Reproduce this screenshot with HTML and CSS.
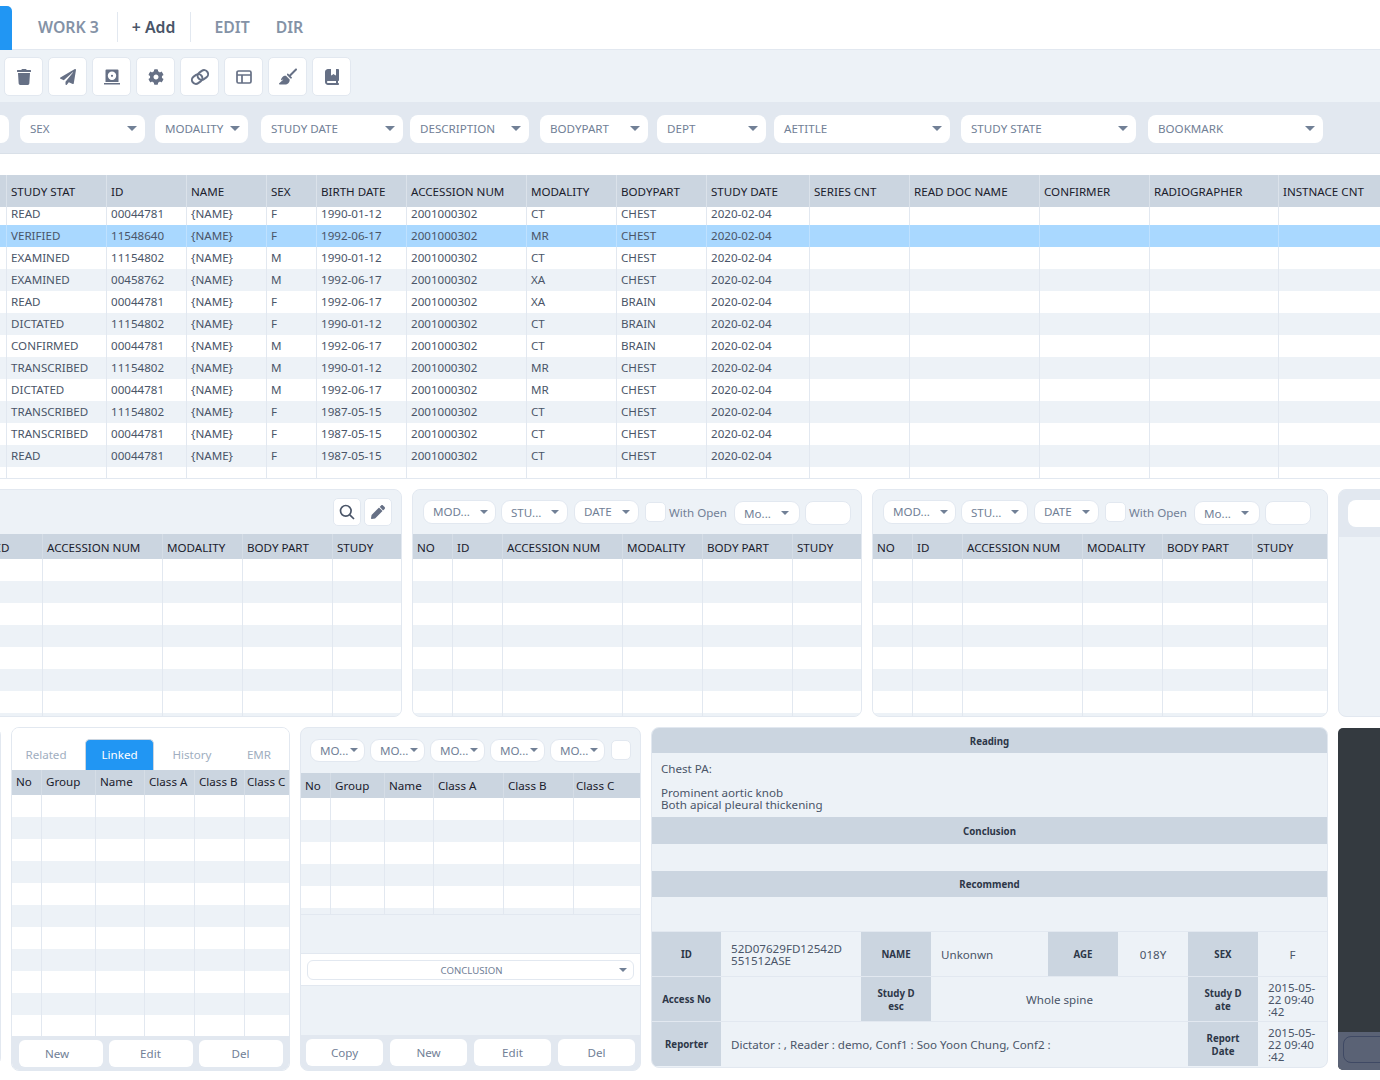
FILE: index.html
```html
<!DOCTYPE html>
<html lang="en">
<head>
<meta charset="utf-8">
<title>Worklist</title>
<link rel="stylesheet" href="styles.css">
</head>
<body>
<div class="page">
  <nav class="tabs">
    <span class="tab-active"></span>
    <span class="tab tab-work">WORK 3</span>
    <span class="tab tab-add">+ Add</span>
    <span class="tab tab-edit">EDIT</span>
    <span class="tab tab-dir">DIR</span>
  </nav>

  <div class="toolbar">
    <button class="tool"><svg class="ico" viewBox="0 0 448 512"><path d="M432 32H312l-9.4-18.7A24 24 0 0 0 281.100 0H166.800a23.720 23.720 0 0 0-21.400 13.300L136 32H16A16 16 0 0 0 0 48v32a16 16 0 0 0 16 16h416a16 16 0 0 0 16-16V48a16 16 0 0 0-16-16zM53.200 467a48 48 0 0 0 47.900 45h245.800a48 48 0 0 0 47.900-45L416 128H32z"/></svg></button>
    <button class="tool"><svg class="ico" viewBox="0 0 512 512"><path d="M476 3.200L12.500 270.600c-18.100 10.400-15.800 35.600 2.200 43.200L121 358.400l287.300-253.200c5.500-4.900 13.300 2.600 8.600 8.300L176 407v80.500c0 23.600 28.500 32.900 42.500 15.800L282 426l124.600 52.200c14.200 6 30.400-2.900 33-18.200l72-432C515 7.800 493.300-6.800 476 3.200z"/></svg></button>
    <button class="tool"><svg class="ico" viewBox="0 0 16 16"><path fill-rule="evenodd" d="M2.500 0.500h11a1 1 0 0 1 1 1V13h-13V1.500a1 1 0 0 1 1-1zM8 2.600a4.200 4.200 0 1 0 0 8.400 4.200 4.200 0 0 0 0-8.400zM8 5.700a1.100 1.100 0 1 1 0 2.200 1.100 1.100 0 0 1 0-2.200zM0 14h16v1.500H0z"/></svg></button>
    <button class="tool"><svg class="ico" viewBox="0 0 512 512"><path d="M487.400 315.700l-42.600-24.600c4.300-23.200 4.300-47 0-70.200l42.600-24.600c4.900-2.800 7.100-8.600 5.500-14-11.100-35.600-30-67.800-54.700-94.600-3.800-4.100-10-5.100-14.800-2.300L380.800 110c-17.900-15.400-38.500-27.300-60.800-35.100V25.800c0-5.600-3.900-10.500-9.400-11.700-36.700-8.200-74.300-7.800-109.200 0-5.500 1.200-9.400 6.100-9.400 11.700V75c-22.200 7.900-42.800 19.800-60.800 35.100L88.700 85.500c-4.900-2.800-11-1.900-14.800 2.300-24.700 26.700-43.600 58.900-54.700 94.600-1.700 5.400.6 11.200 5.500 14L67.300 221c-4.300 23.200-4.300 47 0 70.200l-42.600 24.600c-4.900 2.800-7.100 8.600-5.500 14 11.100 35.600 30 67.800 54.700 94.600 3.800 4.100 10 5.100 14.800 2.300l42.600-24.600c17.900 15.400 38.500 27.300 60.800 35.100v49.200c0 5.600 3.900 10.500 9.400 11.700 36.700 8.200 74.300 7.800 109.200 0 5.500-1.200 9.400-6.100 9.400-11.700v-49.200c22.200-7.900 42.800-19.800 60.800-35.100l42.600 24.600c4.900 2.800 11 1.900 14.800-2.300 24.700-26.700 43.600-58.900 54.700-94.600 1.500-5.500-.7-11.300-5.600-14.100zM256 336c-44.100 0-80-35.900-80-80s35.900-80 80-80 80 35.900 80 80-35.900 80-80 80z"/></svg></button>
    <button class="tool"><svg class="ico ico-link" viewBox="0 0 20 20"><g transform="rotate(-35 10 10)"><rect x="1" y="6" width="11" height="8" rx="4"/><rect x="8" y="6" width="11" height="8" rx="4"/></g></svg></button>
    <button class="tool"><svg class="ico ico-line" viewBox="0 0 16 16"><rect x="1" y="2" width="14" height="12" rx="1.500"/><path d="M1 6h14M6 6v8"/></svg></button>
    <button class="tool"><svg class="ico ico-broom" viewBox="0 0 576 512"><path d="M566.600 54.600c12.500-12.500 12.500-32.800 0-45.300s-32.800-12.500-45.300 0l-192 192-34.700-34.700c-4.200-4.200-10-6.600-16-6.600c-12.500 0-22.600 10.100-22.600 22.600v29.100L364.300 320h29.100c12.500 0 22.600-10.100 22.600-22.600c0-6-2.400-11.800-6.600-16l-34.700-34.700 192-192zM341.100 353.400L222.600 234.900c-42.700-3.700-85.200 11.700-115.800 42.300l-8 8C76.500 307.500 64 337.700 64 369.200c0 6.800 7.100 11.200 13.200 8.200l51.100-25.500c5-2.500 9.500 4.100 5.400 7.900L7.300 473.400C2.700 477.600 0 483.600 0 489.900C0 502.100 9.900 512 22.100 512l173.300 0c38.800 0 75.900-15.400 103.400-42.800c30.600-30.600 45.900-73.100 42.300-115.800z"/></svg></button>
    <button class="tool"><svg class="ico" viewBox="0 0 448 512"><path d="M0 96C0 43 43 0 96 0h96V190.700c0 13.400 15.500 20.900 26 12.500L272 160l54 43.200c10.500 8.400 26 .9 26-12.500V0h32 32c17.700 0 32 14.300 32 32V352c0 17.700-14.300 32-32 32v64c17.700 0 32 14.300 32 32s-14.300 32-32 32H384 96c-53 0-96-43-96-96V96zM64 416c0 17.700 14.300 32 32 32H352V384H96c-17.700 0-32 14.300-32 32z"/></svg></button>
  </div>

  <div class="filters">
    <div class="select f-first"><span class="caret"></span></div>
    <div class="select f-sex"><span>SEX</span><span class="caret"></span></div>
    <div class="select f-modality"><span>MODALITY</span><span class="caret"></span></div>
    <div class="select f-date"><span>STUDY DATE</span><span class="caret"></span></div>
    <div class="select f-desc"><span>DESCRIPTION</span><span class="caret"></span></div>
    <div class="select f-body"><span>BODYPART</span><span class="caret"></span></div>
    <div class="select f-dept"><span>DEPT</span><span class="caret"></span></div>
    <div class="select f-ae"><span>AETITLE</span><span class="caret"></span></div>
    <div class="select f-state"><span>STUDY STATE</span><span class="caret"></span></div>
    <div class="select f-book"><span>BOOKMARK</span><span class="caret"></span></div>
  </div>

  <section class="worklist">
    <table class="wl-table wl-head">
      <colgroup><col class="w6"><col class="w100"><col class="w80"><col class="w80"><col class="w50"><col class="w90"><col class="w120"><col class="w90"><col class="w90"><col class="w103"><col class="w100"><col class="w130"><col class="w110"><col class="w129"><col class="w102"></colgroup>
      <tr><th></th><th>STUDY STAT</th><th>ID</th><th>NAME</th><th>SEX</th><th>BIRTH DATE</th><th>ACCESSION NUM</th><th>MODALITY</th><th>BODYPART</th><th>STUDY DATE</th><th>SERIES CNT</th><th>READ DOC NAME</th><th>CONFIRMER</th><th>RADIOGRAPHER</th><th>INSTNACE CNT</th></tr>
    </table>
    <div class="wl-scroll">
    <table class="wl-table wl-body">
      <colgroup><col class="w6"><col class="w100"><col class="w80"><col class="w80"><col class="w50"><col class="w90"><col class="w120"><col class="w90"><col class="w90"><col class="w103"><col class="w100"><col class="w130"><col class="w110"><col class="w129"><col class="w102"></colgroup>
      <tr><td></td><td>READ</td><td>00044781</td><td>{NAME}</td><td>F</td><td>1990-01-12</td><td>2001000302</td><td>CT</td><td>CHEST</td><td>2020-02-04</td><td></td><td></td><td></td><td></td><td></td></tr>
      <tr class="selected"><td></td><td>VERIFIED</td><td>11548640</td><td>{NAME}</td><td>F</td><td>1992-06-17</td><td>2001000302</td><td>MR</td><td>CHEST</td><td>2020-02-04</td><td></td><td></td><td></td><td></td><td></td></tr>
      <tr><td></td><td>EXAMINED</td><td>11154802</td><td>{NAME}</td><td>M</td><td>1990-01-12</td><td>2001000302</td><td>CT</td><td>CHEST</td><td>2020-02-04</td><td></td><td></td><td></td><td></td><td></td></tr>
      <tr><td></td><td>EXAMINED</td><td>00458762</td><td>{NAME}</td><td>M</td><td>1992-06-17</td><td>2001000302</td><td>XA</td><td>CHEST</td><td>2020-02-04</td><td></td><td></td><td></td><td></td><td></td></tr>
      <tr><td></td><td>READ</td><td>00044781</td><td>{NAME}</td><td>F</td><td>1992-06-17</td><td>2001000302</td><td>XA</td><td>BRAIN</td><td>2020-02-04</td><td></td><td></td><td></td><td></td><td></td></tr>
      <tr><td></td><td>DICTATED</td><td>11154802</td><td>{NAME}</td><td>F</td><td>1990-01-12</td><td>2001000302</td><td>CT</td><td>BRAIN</td><td>2020-02-04</td><td></td><td></td><td></td><td></td><td></td></tr>
      <tr><td></td><td>CONFIRMED</td><td>00044781</td><td>{NAME}</td><td>M</td><td>1992-06-17</td><td>2001000302</td><td>CT</td><td>BRAIN</td><td>2020-02-04</td><td></td><td></td><td></td><td></td><td></td></tr>
      <tr><td></td><td>TRANSCRIBED</td><td>11154802</td><td>{NAME}</td><td>M</td><td>1990-01-12</td><td>2001000302</td><td>MR</td><td>CHEST</td><td>2020-02-04</td><td></td><td></td><td></td><td></td><td></td></tr>
      <tr><td></td><td>DICTATED</td><td>00044781</td><td>{NAME}</td><td>M</td><td>1992-06-17</td><td>2001000302</td><td>MR</td><td>CHEST</td><td>2020-02-04</td><td></td><td></td><td></td><td></td><td></td></tr>
      <tr><td></td><td>TRANSCRIBED</td><td>11154802</td><td>{NAME}</td><td>F</td><td>1987-05-15</td><td>2001000302</td><td>CT</td><td>CHEST</td><td>2020-02-04</td><td></td><td></td><td></td><td></td><td></td></tr>
      <tr><td></td><td>TRANSCRIBED</td><td>00044781</td><td>{NAME}</td><td>F</td><td>1987-05-15</td><td>2001000302</td><td>CT</td><td>CHEST</td><td>2020-02-04</td><td></td><td></td><td></td><td></td><td></td></tr>
      <tr><td></td><td>READ</td><td>00044781</td><td>{NAME}</td><td>F</td><td>1987-05-15</td><td>2001000302</td><td>CT</td><td>CHEST</td><td>2020-02-04</td><td></td><td></td><td></td><td></td><td></td></tr>
      <tr><td></td><td></td><td></td><td></td><td></td><td></td><td></td><td></td><td></td><td></td><td></td><td></td><td></td><td></td><td></td></tr>
    </table>
    </div>
  </section>

  <section class="mid-row">
    <div class="panel p-450">
      <div class="p-tools tools-end">
        <button class="mini"><svg class="ico-line ico-search" viewBox="0 0 16 16"><circle cx="6.800" cy="6.800" r="5.300"/><path d="M10.800 10.800 15 15"/></svg></button>
        <button class="mini"><svg class="ico-s" viewBox="0 0 512 512"><path d="M497.900 142.100l-46.100 46.100c-4.700 4.700-12.300 4.700-17 0l-111-111c-4.700-4.700-4.700-12.300 0-17l46.100-46.100c18.700-18.700 49.100-18.700 67.900 0l60.100 60.100c18.800 18.700 18.800 49.100 0 67.900zM284.200 99.800L21.600 362.400.4 483.900c-2.900 16.400 11.400 30.600 27.800 27.800l121.500-21.300 262.600-262.600c4.700-4.700 4.700-12.300 0-17l-111-111c-4.800-4.700-12.400-4.700-17.100 0z"/></svg></button>
      </div>
      <div class="g-head"><span class="c40">NO</span><span class="c50">ID</span><span class="c120">ACCESSION NUM</span><span class="c80">MODALITY</span><span class="c90">BODY PART</span><span class="c-rest">STUDY</span></div>
      <div class="g-body"><i class="c40"></i><i class="c50"></i><i class="c120"></i><i class="c80"></i><i class="c90"></i><i class="c-rest"></i></div>
    </div>

    <div class="panel p-450">
      <div class="p-tools">
        <div class="select s-sm s-mod"><span>MOD...</span><span class="caret"></span></div>
        <div class="select s-sm s-stu"><span>STU...</span><span class="caret"></span></div>
        <div class="select s-sm s-dt"><span>DATE</span><span class="caret"></span></div>
        <span class="check"></span><span class="open-label">With Open</span>
        <div class="select s-sm s-mo"><span>Mo...</span><span class="caret"></span></div>
        <span class="field"></span>
      </div>
      <div class="g-head"><span class="c40">NO</span><span class="c50">ID</span><span class="c120">ACCESSION NUM</span><span class="c80">MODALITY</span><span class="c90">BODY PART</span><span class="c-rest">STUDY</span></div>
      <div class="g-body"><i class="c40"></i><i class="c50"></i><i class="c120"></i><i class="c80"></i><i class="c90"></i><i class="c-rest"></i></div>
    </div>

    <div class="panel p-456">
      <div class="p-tools">
        <div class="select s-sm s-mod"><span>MOD...</span><span class="caret"></span></div>
        <div class="select s-sm s-stu"><span>STU...</span><span class="caret"></span></div>
        <div class="select s-sm s-dt"><span>DATE</span><span class="caret"></span></div>
        <span class="check"></span><span class="open-label">With Open</span>
        <div class="select s-sm s-mo"><span>Mo...</span><span class="caret"></span></div>
        <span class="field"></span>
      </div>
      <div class="g-head"><span class="c40">NO</span><span class="c50">ID</span><span class="c120">ACCESSION NUM</span><span class="c80">MODALITY</span><span class="c90">BODY PART</span><span class="c-rest">STUDY</span></div>
      <div class="g-body"><i class="c40"></i><i class="c50"></i><i class="c120"></i><i class="c80"></i><i class="c90"></i><i class="c-rest"></i></div>
    </div>

    <div class="panel p-side">
      <div class="side-top"><span class="side-field"></span></div>
    </div>
  </section>

  <section class="low-row">
    <div class="stub"></div>

    <div class="panel p-a">
      <div class="a-tabs">
        <span class="a-tab t-rel">Related</span>
        <span class="a-tab t-link">Linked</span>
        <span class="a-tab t-his">History</span>
        <span class="a-tab t-emr">EMR</span>
      </div>
      <div class="g-head h-a"><span class="a1">No</span><span class="a2">Group</span><span class="a3">Name</span><span class="a4">Class A</span><span class="a4">Class B</span><span class="c-rest tight">Class C</span></div>
      <div class="g-body b-a"><i class="a1"></i><i class="a2"></i><i class="a3"></i><i class="a4"></i><i class="a4"></i><i class="c-rest"></i></div>
      <div class="p-foot">
        <button class="foot-btn shift">New</button><button class="foot-btn">Edit</button><button class="foot-btn">Del</button>
      </div>
    </div>

    <div class="panel p-b">
      <div class="b-tools">
        <div class="select s-xs"><span>MO...</span><span class="caret"></span></div>
        <div class="select s-xs"><span>MO...</span><span class="caret"></span></div>
        <div class="select s-xs"><span>MO...</span><span class="caret"></span></div>
        <div class="select s-xs"><span>MO...</span><span class="caret"></span></div>
        <div class="select s-xs"><span>MO...</span><span class="caret"></span></div>
        <span class="check"></span>
      </div>
      <div class="g-head h-b"><span class="b1">No</span><span class="b2">Group</span><span class="b3">Name</span><span class="b4">Class A</span><span class="b4">Class B</span><span class="c-rest tight">Class C</span></div>
      <div class="g-body b-b"><i class="b1"></i><i class="b2"></i><i class="b3"></i><i class="b4"></i><i class="b4"></i><i class="c-rest"></i></div>
      <div class="b-blank b-blank1"></div>
      <div class="b-concl"><div class="select s-concl"><span class="concl-label">CONCLUSION</span><span class="caret"></span></div></div>
      <div class="b-blank b-blank2"></div>
      <div class="p-foot foot-b">
        <button class="foot-btn">Copy</button><button class="foot-btn">New</button><button class="foot-btn">Edit</button><button class="foot-btn">Del</button>
      </div>
    </div>

    <div class="panel p-c">
      <h4 class="c-title t1">Reading</h4>
      <div class="c-text">Chest PA:<br><br>Prominent aortic knob<br>Both apical pleural thickening</div>
      <h4 class="c-title t2">Conclusion</h4>
      <div class="c-empty e1"></div>
      <h4 class="c-title t3">Recommend</h4>
      <div class="c-empty e2"></div>
      <table class="info">
        <colgroup><col class="i69"><col class="i140"><col class="i70"><col class="i117"><col class="i70"><col class="i70"><col class="i70"><col class="i69"></colgroup>
        <tr class="r44"><th>ID</th><td>52D07629FD12542D<br>551512ASE</td><th>NAME</th><td>Unkonwn</td><th>AGE</th><td class="ctr">018Y</td><th>SEX</th><td class="ctr">F</td></tr>
        <tr class="r45"><th>Access No</th><td></td><th>Study D<br>esc</th><td colspan="3" class="ctr">Whole spine</td><th>Study D<br>ate</th><td>2015-05-<br>22 09:40<br>:42</td></tr>
        <tr class="r46"><th>Reporter</th><td colspan="5">Dictator : , Reader : demo, Conf1 : Soo Yoon Chung, Conf2 :</td><th>Report<br>Date</th><td>2015-05-<br>22 09:40<br>:42</td></tr>
      </table>
    </div>

    <div class="p-dark">
      <div class="dark-foot"><span class="dark-btn"></span></div>
    </div>
  </section>
</div>
</body>
</html>
```

FILE: styles.css
```css
* { box-sizing: border-box; }
html, body { margin: 0; padding: 0; }
body { font-family: "Noto Sans", "Open Sans", sans-serif; font-size: 11.6px; color: #4a5568; background: #fff; }
.page { width: 1380px; height: 1080px; overflow: hidden; }

/* top tabs */
.tabs { display: flex; align-items: center; height: 50px; padding-top: 5px; background: #fff; border-bottom: 1px solid #e2e8f0; font-size: 15.8px; font-weight: 600; color: #8492a6; }
.tab-active { align-self: flex-end; width: 12px; height: 44px; background: #2196f3; border-top-right-radius: 5px; margin-bottom: -1px; }
.tab { line-height: 30px; white-space: nowrap; }
.tab-work { margin-left: 26px; padding-right: 18px; border-right: 1px solid #e2e8f0; }
.tab-add { padding: 0 15px 0 14px; color: #4a5568; border-right: 1px solid #e2e8f0; }
.tab-edit { margin-left: 23px; }
.tab-dir { margin-left: 26px; }

/* icon toolbar */
.toolbar { display: flex; gap: 5px; height: 53px; padding: 7px 0 0 4px; background: #edf2f7; border-bottom: 1px solid #e2e8f0; }
.tool { display: flex; align-items: center; justify-content: center; width: 39px; height: 39px; padding: 0; background: #fff; border: 1px solid #e2e8f0; border-radius: 5px; }
.ico { width: 16px; height: 16px; fill: #667085; }
.ico-link { fill: none; stroke: #667085; stroke-width: 2; width: 20px; height: 20px; }
.ico-line { fill: none; stroke: #667085; stroke-width: 1.700; }
.ico-broom { width: 18px; height: 17px; }

/* filter bar */
.filters { display: flex; height: 51px; padding-top: 12px; margin-left: -100px; background: #e2e8f0; border-bottom: 1px solid #d9e0e8; width: 1480px; }
.select { display: flex; align-items: center; justify-content: space-between; height: 28px; padding: 0 8px 0 10px; background: #fff; border-radius: 8px; color: #718096; white-space: nowrap; }
.filters .select { padding-bottom: 1px; }
.caret { flex: none; width: 0; height: 0; border-left: 5px solid transparent; border-right: 5px solid transparent; border-top: 5px solid #718096; }
.f-first { width: 109px; }
.f-sex { width: 125px; margin-left: 11px; }
.f-modality { width: 93px; margin-left: 10px; }
.f-date { width: 142px; margin-left: 13px; }
.f-desc { width: 119px; margin-left: 7px; }
.f-body { width: 108px; margin-left: 11px; }
.f-dept { width: 109px; margin-left: 9px; }
.f-ae { width: 176px; margin-left: 8px; }
.f-state { width: 175px; margin-left: 11px; }
.f-book { width: 175px; margin-left: 12px; }

/* main worklist */
.worklist { margin-top: 21px; height: 304px; border-bottom: 1px solid #e2e8f0; overflow: hidden; }
.wl-table { table-layout: fixed; border-collapse: collapse; width: 1380px; }
.w6 { width: 6px; } .w50 { width: 50px; } .w80 { width: 80px; } .w90 { width: 90px; } .w100 { width: 100px; }
.w102 { width: 102px; } .w103 { width: 103px; } .w110 { width: 110px; } .w120 { width: 120px; } .w129 { width: 129px; } .w130 { width: 130px; }
.wl-head { position: relative; z-index: 1; background: #cbd5e0; }
.wl-head th { height: 32px; padding: 0 0 0 4.500px; text-align: left; font-weight: 400; color: #1a202c; border-left: 1px solid #dbe2ea; white-space: nowrap; overflow: hidden; }
.wl-head th:first-child { border-left: 0; }
.wl-scroll { margin-top: -4px; height: 276px; overflow: hidden; }
.wl-body td { height: 22px; padding: 0 0 0 4.500px; border-left: 1px solid #e2e8f0; white-space: nowrap; overflow: hidden; line-height: 16px; }
.wl-body td:first-child { border-left: 0; }
.wl-body tr:nth-child(even) { background: #edf2f7; }
.wl-body tr.selected { background: #a9d8ff; }
.wl-body tr.selected td { border-left-color: #bfe1ff; }

/* shared panel */
.panel { border: 1px solid #e2e8f0; border-radius: 8px; overflow: hidden; background: #edf2f7; flex: none; }
.mid-row { display: flex; gap: 10px; margin: 10px 0 0 -48px; height: 228px; }
.p-450 { width: 450px; }
.p-456 { width: 456px; }
.p-side { width: 100px; }
.p-tools { display: flex; align-items: center; height: 44px; padding: 0 0 0 10px; background: #edf2f7; color: #718096; }
.tools-end { justify-content: flex-end; gap: 3px; padding-right: 9px; }
.mini { display: flex; align-items: center; justify-content: center; width: 28px; height: 28px; padding: 0; background: #fff; border: 1px solid #e2e8f0; border-radius: 5px; }
.ico-s { width: 14px; height: 14px; fill: #667085; }
.ico-search { width: 16px; height: 16px; stroke: #4a5568; }
.s-sm { height: 24px; padding: 0 8px 0 9px; border: 1px solid #e2e8f0; border-radius: 9px; }
.s-sm .caret { border-left-width: 4px; border-right-width: 4px; border-top-width: 4px; }
.s-mod { width: 73px; padding-right: 7px; }
.s-stu { width: 67px; margin-left: 5px; }
.s-dt { width: 65px; margin-left: 6px; }
.s-mod span:first-child, .s-dt span:first-child { padding-bottom: 2px; }
.s-mo { width: 66px; margin-left: 7px; margin-top: 2px; padding-left: 9px; padding-right: 10px; }
.check { flex: none; width: 21px; height: 20px; background: #fff; border: 1px solid #e2e8f0; border-radius: 5px; }
.s-dt + .check { margin-left: 6px; }
.open-label { margin-left: 3px; margin-top: 1px; white-space: nowrap; }
.field { flex: none; width: 46px; height: 24px; margin-left: 5px; margin-top: 2px; background: #fff; border: 1px solid #e2e8f0; border-radius: 8px; }

.g-head { display: flex; height: 25px; background: #cbd5e0; color: #1a202c; line-height: 27px; white-space: nowrap; }
.g-head span { flex: none; padding-left: 4px; overflow: hidden; border-left: 1px solid #d5dde6; }
.g-head span:first-child { border-left: 0; }
.g-body { display: flex; height: 158px; background: repeating-linear-gradient(#fff 0 22px, #edf2f7 22px 44px); }
.g-body i { flex: none; border-left: 1px solid #e2e8f0; }
.g-body i:first-child { border-left: 0; }
.c40 { width: 39px; } .c50 { width: 50px; } .c80 { width: 80px; } .c90 { width: 90px; } .c120 { width: 120px; }
.g-head .c-rest, .g-body .c-rest { flex: 1; }
.g-head .tight { padding-left: 2px; }

.side-top { height: 47px; padding: 10px 0 0 9px; background: #e2e8f0; border-bottom: 1px solid #e2e8f0; }
.side-field { display: block; height: 27px; background: #fff; border-radius: 8px; }

/* lower row */
.low-row { display: flex; align-items: flex-start; gap: 10px; margin: 10px 0 0 -50px; }
.stub { flex: none; width: 51px; height: 339px; background: #fff; border: 1px solid #e2e8f0; border-radius: 8px; }

.p-a { width: 279px; height: 344px; background: #fff; }
.a-tabs { display: flex; height: 42px; padding-top: 11px; background: #fff; color: #a0aec0; line-height: 31px; }
.a-tab { flex: none; text-align: center; }
.t-rel { width: 73px; padding-right: 5px; }
.t-link { width: 69px; background: #2196f3; color: #fff; border: 1px solid #cbd5e0; border-bottom: 0; border-radius: 5px 5px 0 0; line-height: 30px; }
.t-his { width: 76px; }
.t-emr { width: 58px; }
.h-a { line-height: 24px; }
.h-b { line-height: 26px; }
.a1 { width: 29px; } .a2 { width: 54px; } .a3 { width: 49px; } .a4 { width: 50px; }
.b1 { width: 29px; } .b2 { width: 54px; } .b3 { width: 49px; } .b4 { width: 70px; }
.b-a { height: 241px; }
.p-foot { display: flex; justify-content: center; gap: 6px; height: 35px; padding-top: 4px; background: #e2e8f0; }
.foot-btn { flex: none; width: 84px; height: 27px; padding: 0; background: #fff; border: 0; border-radius: 6px; color: #718096; font: inherit; }
.shift { padding-right: 7px; }

.p-b { width: 341px; height: 344px; }
.b-tools { display: flex; align-items: center; gap: 5px; height: 45px; padding: 0 0 1px 9px; }
.s-xs { width: 55px; height: 23px; padding: 0 6px 0 9px; border: 1px solid #e2e8f0; border-radius: 9px; }
.s-xs .caret { border-left-width: 4px; border-right-width: 4px; border-top-width: 4px; }
.b-tools .check { width: 20px; height: 20px; margin-left: 1px; }
.b-b { height: 117px; border-bottom: 1px solid #e2e8f0; }
.b-blank1 { height: 38px; }
.b-blank2 { height: 49px; }
.b-concl { height: 33px; padding: 6px 6px 0; background: #fff; border-top: 1px solid #e2e8f0; border-bottom: 1px solid #e2e8f0; }
.s-concl { justify-content: flex-end; height: 20px; border: 1px solid #e2e8f0; border-radius: 6px; padding: 0 6px; }
.concl-label { flex: 1; padding-left: 10px; text-align: center; font-size: 9.6px; }
.s-concl .caret { border-left-width: 4px; border-right-width: 4px; border-top-width: 4px; }
.foot-b { justify-content: flex-start; gap: 7px; padding-left: 5px; height: 36px; }
.foot-b .foot-btn { width: 77px; }

.p-c { width: 677px; height: 341px; }
.c-title { margin: 0; background: #cbd5e0; color: #2d3748; font-size: 9.7px; font-weight: 700; text-align: center; }
.t1 { height: 25px; line-height: 28px; }
.t2 { height: 27px; line-height: 29px; }
.t3 { height: 26px; line-height: 28px; }
.c-text { height: 64px; padding: 10px 9px 0; line-height: 12px; }
.c-empty.e1 { height: 27px; }
.c-empty.e2 { height: 35px; border-bottom: 1px solid #e2e8f0; }
.info { table-layout: fixed; border-collapse: collapse; width: 675px; }
.i69 { width: 69px; } .i70 { width: 70px; } .i117 { width: 117px; } .i140 { width: 140px; }
.r44 { height: 44px; } .r45 { height: 45px; } .r46 { height: 45px; }
.info th { padding: 2px 4px 0; background: #cbd5e0; color: #2d3748; font-size: 9.7px; line-height: 13px; font-weight: 700; text-align: center; border-bottom: 1px solid #e2e8f0; }
.info td { padding: 2px 10px 0; line-height: 12px; border-bottom: 1px solid #e2e8f0; white-space: nowrap; }
.info td.ctr { text-align: center; }
.info tr:last-child th, .info tr:last-child td { border-bottom: 0; }

.p-dark { flex: none; position: relative; width: 100px; height: 342px; margin-top: 1px; background: #343a40; border-radius: 5px; overflow: hidden; }
.dark-foot { position: absolute; left: 0; right: 0; bottom: 0; height: 38px; padding: 4px 0 0 5px; background: #5a6275; }
.dark-btn { display: block; height: 27px; border: 1px solid #3f4964; border-radius: 8px; }
```
